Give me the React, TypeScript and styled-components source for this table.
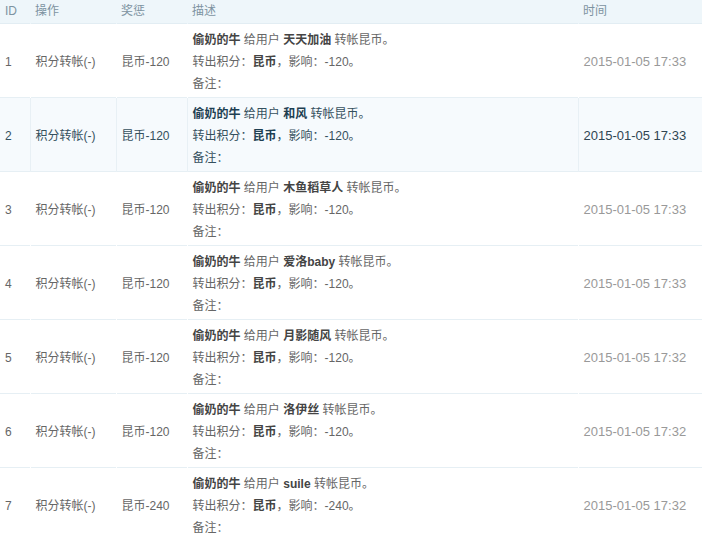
import React from 'react'
import styled, { createGlobalStyle, css } from 'styled-components'

const GlobalStyle = createGlobalStyle`
  html, body {
    margin: 0;
    padding: 0;
    background: #ffffff;
  }
  body {
    font-family: 'Liberation Sans', 'Noto Sans CJK SC', sans-serif;
    font-size: 12px;
    color: #666;
  }
`

const Table = styled.table`
  width: 702px;
  border-collapse: collapse;
  table-layout: fixed;
`

const HeadRow = styled.tr`
  background: #eef6fa;
  border-bottom: 1px solid #e2edf3;
`

const HeadCell = styled.th<{ w?: number }>`
  box-sizing: border-box;
  ${(p) => p.w && css`width: ${p.w}px;`}
  height: 23px;
  padding: 0 5px;
  text-align: left;
  font-weight: normal;
  color: #7d93a1;
  line-height: 23px;
  vertical-align: top;
`

const Row = styled.tr<{ active?: boolean }>`
  border-bottom: 1px solid #e6eff4;
  background: ${(p) => (p.active ? '#f6fafd' : '#ffffff')};
  color: ${(p) => (p.active ? '#35505e' : '#666')};
`

const Cell = styled.td<{ active?: boolean }>`
  box-sizing: border-box;
  padding: 5px 5px 2px;
  line-height: 22px;
  vertical-align: middle;
  border-right: 1px solid ${(p) => (p.active ? '#e8f0f5' : 'transparent')};
  &:last-child {
    border-right: none;
  }
`

const TimeCell = styled(Cell)`
  color: ${(p) => (p.active ? '#2f4552' : '#999')};
  white-space: nowrap;
  font-size: 13px;
`

const Strong = styled.b<{ active?: boolean }>`
  color: ${(p) => (p.active ? '#1e3f52' : '#444')};
`

const Line = styled.div``

interface Record {
  id: number
  reward: string
  user: string
  amount: string
  time: string
}

const records: Record[] = [
  { id: 1, reward: '昆币-120', user: '天天加油', amount: '-120', time: '2015-01-05 17:33' },
  { id: 2, reward: '昆币-120', user: '和风', amount: '-120', time: '2015-01-05 17:33' },
  { id: 3, reward: '昆币-120', user: '木鱼稻草人', amount: '-120', time: '2015-01-05 17:33' },
  { id: 4, reward: '昆币-120', user: '爱洛baby', amount: '-120', time: '2015-01-05 17:33' },
  { id: 5, reward: '昆币-120', user: '月影随风', amount: '-120', time: '2015-01-05 17:32' },
  { id: 6, reward: '昆币-120', user: '洛伊丝', amount: '-120', time: '2015-01-05 17:32' },
  { id: 7, reward: '昆币-240', user: 'suile', amount: '-240', time: '2015-01-05 17:32' }
]

const App = () => {
  return (
    <>
      <GlobalStyle />
      <Table>
        <thead>
          <HeadRow>
            <HeadCell w={30}>ID</HeadCell>
            <HeadCell w={86}>操作</HeadCell>
            <HeadCell w={71}>奖惩</HeadCell>
            <HeadCell w={391}>描述</HeadCell>
            <HeadCell>时间</HeadCell>
          </HeadRow>
        </thead>
        <tbody>
          {records.map((r) => {
            const active = r.id === 2
            return (
              <Row key={r.id} active={active}>
                <Cell active={active}>{r.id}</Cell>
                <Cell active={active}>积分转帐(-)</Cell>
                <Cell active={active}>{r.reward}</Cell>
                <Cell active={active}>
                  <Line>
                    <Strong active={active}>偷奶的牛</Strong> 给用户{' '}
                    <Strong active={active}>{r.user}</Strong> 转帐昆币。
                  </Line>
                  <Line>
                    转出积分：<Strong active={active}>昆币</Strong>，影响：{r.amount}。
                  </Line>
                  <Line>备注：</Line>
                </Cell>
                <TimeCell active={active}>{r.time}</TimeCell>
              </Row>
            )
          })}
        </tbody>
      </Table>
    </>
  )
}

export default App
